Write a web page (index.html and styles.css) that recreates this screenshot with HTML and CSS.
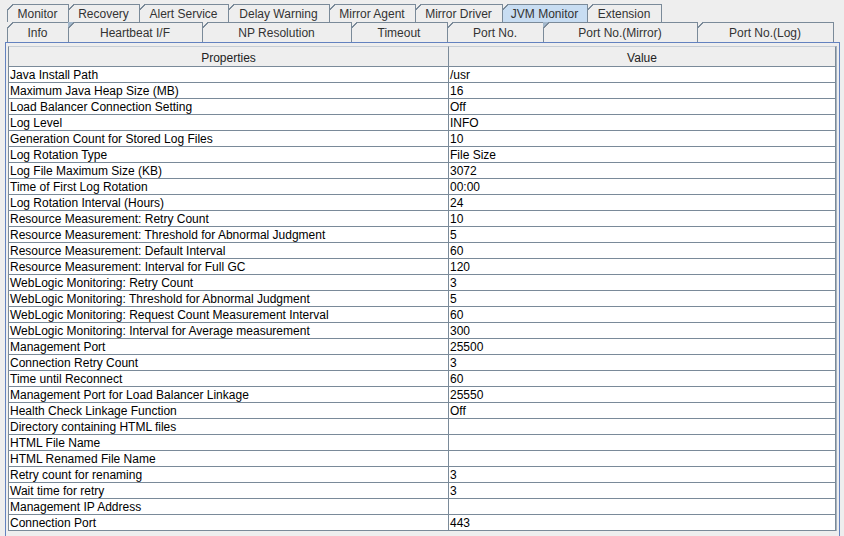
FILE: index.html
```html
<!DOCTYPE html>
<html lang="en">
<head>
    <meta charset="UTF-8">
    <title>JVM Monitor</title>
    <link rel="stylesheet" href="styles.css">
</head>

<body>
<div class="tabpane">
    <div class="tabrow back">
        <div class="tab">Monitor</div>
        <div class="tab">Recovery</div>
        <div class="tab">Alert Service</div>
        <div class="tab">Delay Warning</div>
        <div class="tab">Mirror Agent</div>
        <div class="tab">Mirror Driver</div>
        <div class="tab selected">JVM Monitor</div>
        <div class="tab">Extension</div>
    </div>
    <div class="tabrow front">
        <div class="tab">Info</div>
        <div class="tab hl">Heartbeat I/F</div>
        <div class="tab">NP Resolution</div>
        <div class="tab">Timeout</div>
        <div class="tab">Port No.</div>
        <div class="tab hl">Port No.(Mirror)</div>
        <div class="tab">Port No.(Log)</div>
    </div>

    <div class="content">
        <div class="scroll">
            <table class="props">
                <thead>
                <tr><th class="name">Properties</th><th class="value">Value</th></tr>
                </thead>
                <tbody>
                <tr><td>Java Install Path</td><td>/usr</td></tr>
                <tr><td>Maximum Java Heap Size (MB)</td><td>16</td></tr>
                <tr><td>Load Balancer Connection Setting</td><td>Off</td></tr>
                <tr><td>Log Level</td><td>INFO</td></tr>
                <tr><td>Generation Count for Stored Log Files</td><td>10</td></tr>
                <tr><td>Log Rotation Type</td><td>File Size</td></tr>
                <tr><td>Log File Maximum Size (KB)</td><td>3072</td></tr>
                <tr><td>Time of First Log Rotation</td><td>00:00</td></tr>
                <tr><td>Log Rotation Interval (Hours)</td><td>24</td></tr>
                <tr><td>Resource Measurement: Retry Count</td><td>10</td></tr>
                <tr><td>Resource Measurement: Threshold for Abnormal Judgment</td><td>5</td></tr>
                <tr><td>Resource Measurement: Default Interval</td><td>60</td></tr>
                <tr><td>Resource Measurement: Interval for Full GC</td><td>120</td></tr>
                <tr><td>WebLogic Monitoring: Retry Count</td><td>3</td></tr>
                <tr><td>WebLogic Monitoring: Threshold for Abnormal Judgment</td><td>5</td></tr>
                <tr><td>WebLogic Monitoring: Request Count Measurement Interval</td><td>60</td></tr>
                <tr><td>WebLogic Monitoring: Interval for Average measurement</td><td>300</td></tr>
                <tr><td>Management Port</td><td>25500</td></tr>
                <tr><td>Connection Retry Count</td><td>3</td></tr>
                <tr><td>Time until Reconnect</td><td>60</td></tr>
                <tr><td>Management Port for Load Balancer Linkage</td><td>25550</td></tr>
                <tr><td>Health Check Linkage Function</td><td>Off</td></tr>
                <tr><td>Directory containing HTML files</td><td></td></tr>
                <tr><td>HTML File Name</td><td></td></tr>
                <tr><td>HTML Renamed File Name</td><td></td></tr>
                <tr><td>Retry count for renaming</td><td>3</td></tr>
                <tr><td>Wait time for retry</td><td>3</td></tr>
                <tr><td>Management IP Address</td><td></td></tr>
                <tr><td>Connection Port</td><td>443</td></tr>
                </tbody>
            </table>
        </div>
    </div>
</div>
</body>
</html>
```

FILE: styles.css
```css
* {
    margin: 0;
    padding: 0;
    box-sizing: border-box;
}

body {
    background-color: #eeeeee;
    font: normal 12px "Liberation Sans", Arial, sans-serif;
    color: #000;
    overflow: hidden;
    height: 536px;
}

.tabpane {
    padding-top: 4px;
}

/* tab rows */
.tabrow {
    display: flex;
    margin-left: 7px;
}

.tab {
    --tab-bg: #eeeeee;
    --corner: transparent;
    flex: none;
    margin-right: -1px;
    text-align: center;
    color: #333;
    white-space: nowrap;
    border-right: 1px solid #7a8a99;
    background:
        linear-gradient(#7a8a99, #7a8a99) 6px 0 / 100% 1px no-repeat,
        linear-gradient(#7a8a99, #7a8a99) 0 6px / 1px 100% no-repeat,
        linear-gradient(135deg, var(--corner) 4.2px, #7a8a99 4.2px, #7a8a99 5.4px, var(--tab-bg) 5.4px);
}

.tab.selected {
    --tab-bg: #c8ddf2;
}

.tab.hl {
    --corner: #a3b8cc;
}

.back .tab {
    height: 18px;
    padding-top: 2px;
    line-height: 16px;
}

.front .tab {
    height: 20px;
    padding-top: 2px;
    line-height: 18px;
}

.back .tab:nth-child(1) { width: 62px; }
.back .tab:nth-child(2) { width: 72px; }
.back .tab:nth-child(3) { width: 90px; }
.back .tab:nth-child(4) { width: 102px; }
.back .tab:nth-child(5) { width: 87px; }
.back .tab:nth-child(6) { width: 88px; }
.back .tab:nth-child(7) { width: 86px; }
.back .tab:nth-child(8) { width: 75px; }

.front .tab:nth-child(1) { width: 62px; }
.front .tab:nth-child(2) { width: 135px; }
.front .tab:nth-child(3) { width: 150px; }
.front .tab:nth-child(4) { width: 97px; }
.front .tab:nth-child(5) { width: 97px; }
.front .tab:nth-child(6) { width: 155px; }
.front .tab:nth-child(7) { width: 137px; }

/* content area */
.content {
    margin-left: 5px;
    width: 835px;
    height: 520px;
    border: 1px solid #6382bf;
    border-bottom: none;
    padding: 3px 2px 0;
}

.scroll {
    width: 829px;
    border-right: 1px solid #a6b2bd;
}

.props {
    width: 828px;
    border-spacing: 0;
    table-layout: fixed;
}

.props th {
    font-weight: normal;
    padding-top: 3px;
    line-height: 16px;
    background-color: #eeeeee;
    border-top: 1px solid #c6cdd4;
    border-bottom: 1px solid #7a8a99;
    border-right: 1px solid #7a8a99;
    color: #222;
}

.props th.name {
    width: 441px;
    border-left: 1px solid #7a8a99;
}

.props td {
    padding: 1px 0 0 1px;
    line-height: 14px;
    background-color: #fff;
    border-bottom: 1px solid #7a8a99;
    border-right: 1px solid #7a8a99;
    white-space: nowrap;
    overflow: hidden;
}

.props td:first-child {
    border-left: 1px solid #7a8a99;
}
```
